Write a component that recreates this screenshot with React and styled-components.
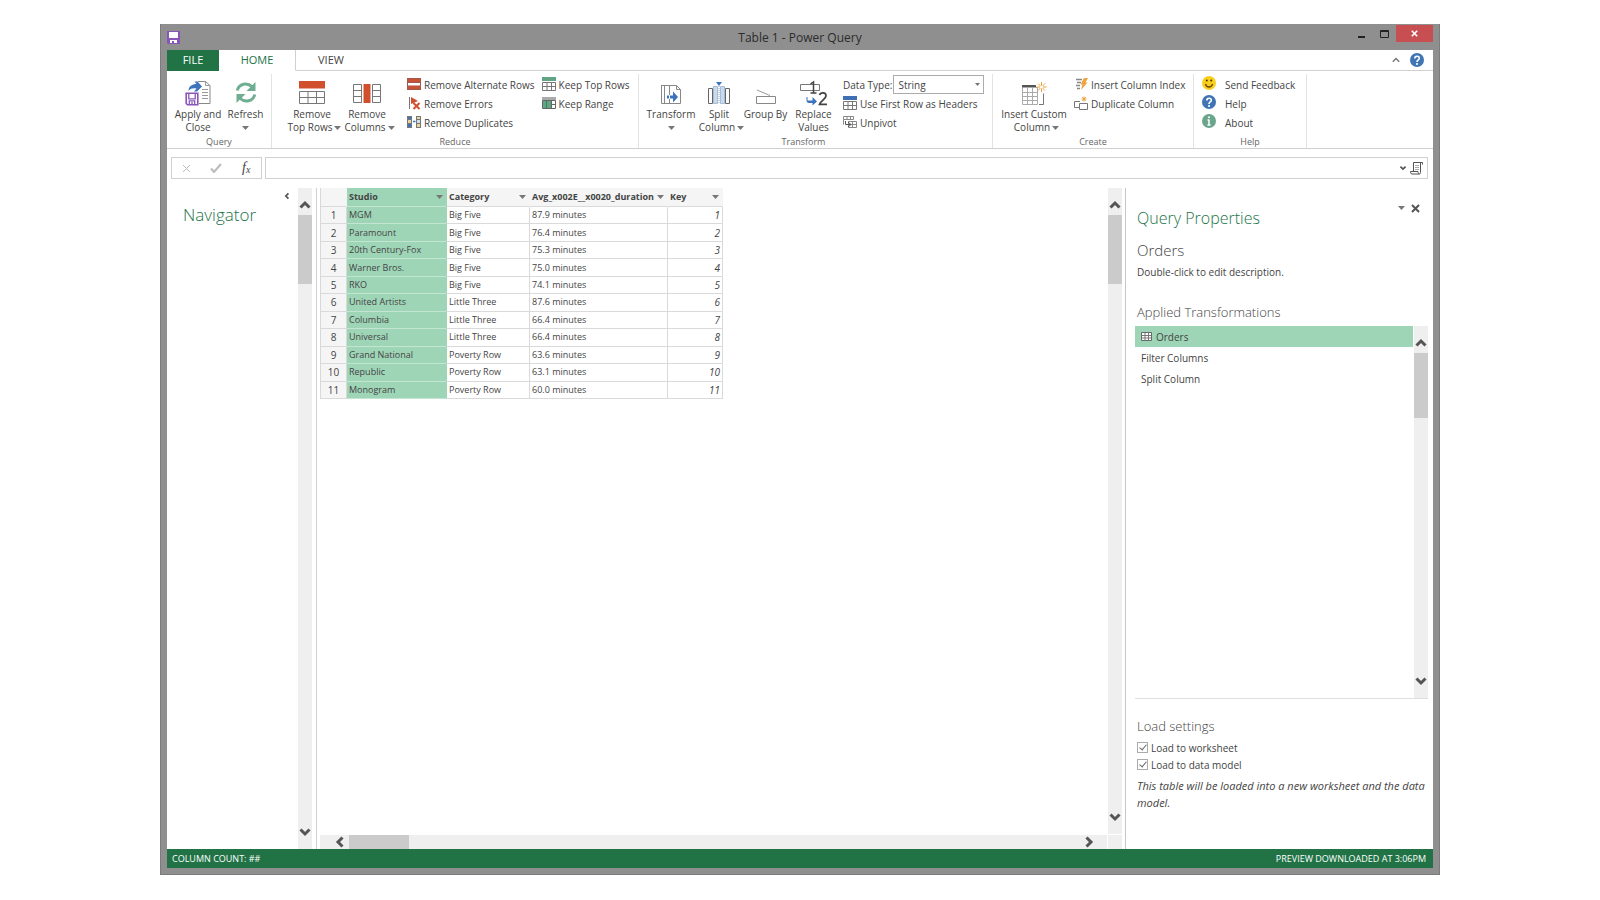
import React from "react";
import styled, { createGlobalStyle } from "styled-components";

const GlobalStyle = createGlobalStyle`
    *{
        box-sizing:border-box;
    }
    body{
        margin:0;
        background:#fff;
        color:#444;
        font-family:"Open Sans", "Noto Sans", sans-serif;
        font-size:10px;
    }
    button, input, select{
        font:inherit;
        color:inherit;
        margin:0;
        padding:0;
        border:0;
        background:none;
    }
    h1, h2, h3, p, ul{
        margin:0;
        padding:0;
        font-weight:normal;
    }
    svg{
        display:block;
        flex:none;
    }
`;

/* ---------- window ---------- */

const Desktop = styled.div`
    min-height:100vh;
    display:flex;
    padding:24px 10vw 25px;
`;

const Window = styled.div`
    flex:1;
    min-width:0;
    display:flex;
    flex-direction:column;
    padding:0 6px 6px;
    background:#8f8f8f;
    border:1px solid #7c7c7c;
    border-top-width:0;
`;

const TitleBar = styled.header`
    display:grid;
    grid-template-columns:1fr auto 1fr;
    align-items:center;
    height:26px;
`;

const Title = styled.h1`
    padding-top:1px;
    font-size:12px;
    line-height:24px;
    color:#2b2b2b;
`;

const WindowControls = styled.div`
    display:flex;
    justify-content:flex-end;
    align-self:start;
    padding-top:1px;
`;

const ControlButton = styled.button`
    display:grid;
    place-items:center;
    width:${p=>p.$close ? 37 : 23}px;
    height:17px;
    background:${p=>p.$close ? '#c84f51' : 'none'};
`;

const Body = styled.div`
    flex:1;
    display:flex;
    flex-direction:column;
    background:#fff;
`;

/* ---------- ribbon ---------- */

const Tabs = styled.nav`
    display:flex;
    height:21px;
`;

const Tab = styled.button`
    width:${p=>p.$width}px;
    font-size:11px;
    line-height:18px;
    color:${p=>p.$file ? '#fff' : p.$active ? '#217346' : '#444'};
    background:${p=>p.$file ? '#217346' : '#fff'};
    border-bottom:1px solid ${p=>p.$file ? '#217346' : p.$active ? '#fff' : '#d0d0d0'};
    border-right:${p=>p.$active ? '1px solid #d0d0d0' : '0'};
`;

const TabsRest = styled.div`
    flex:1;
    display:flex;
    justify-content:flex-end;
    align-items:center;
    gap:9px;
    padding-right:9px;
    border-bottom:1px solid #d0d0d0;
`;

const IconButton = styled.button`
    display:grid;
    place-items:center;
`;

const Ribbon = styled.div`
    display:flex;
    height:78px;
    padding-top:3px;
    border-bottom:1px solid #d0d0d0;
`;

const Group = styled.section`
    display:flex;
    flex-direction:column;
    width:${p=>p.$width}px;
    border-right:1px solid #e3e3e3;
`;

const GroupBody = styled.div`
    flex:1;
    display:flex;
    padding-left:${p=>p.$pad}px;
`;

const GroupLabel = styled.h2`
    padding-right:${p=>p.$pad || 0}px;
    font-size:9px;
    line-height:12px;
    color:#666;
    text-align:center;
`;

const BigButton = styled.button`
    display:flex;
    flex-direction:column;
    align-items:center;
    width:${p=>p.$width}px;
    padding-top:6px;
    line-height:13px;
    white-space:nowrap;
    svg{
        margin-bottom:2px;
    }
`;

const SecondLine = styled.span`
    display:flex;
    align-items:center;
    gap:2px;
    min-height:13px;
    padding-left:${p=>p.$indent ? 5 : 0}px;
    svg{
        margin-bottom:0;
    }
`;

const SmallColumn = styled.div`
    display:flex;
    flex-direction:column;
    padding-left:${p=>p.$pad || 0}px;
    padding-top:1px;
`;

const SmallButton = styled.button`
    display:flex;
    align-items:center;
    gap:${p=>p.$wide ? 9 : 3}px;
    height:19px;
    white-space:nowrap;
    svg{
        margin-bottom:${p=>p.$wide ? 4 : 1}px;
    }
`;

const Field = styled.div`
    display:flex;
    align-items:center;
    gap:1px;
    height:19px;
`;

const SelectBox = styled.div`
    display:grid;
    align-items:center;
    width:91px;
    height:19px;
    border:1px solid #ababab;
    select, svg{
        grid-area:1 / 1;
    }
    select{
        appearance:none;
        width:100%;
        padding-left:4px;
        outline:0;
    }
    svg{
        justify-self:end;
        margin-right:3px;
        pointer-events:none;
    }
`;

/* ---------- formula bar ---------- */

const FormulaBar = styled.div`
    display:flex;
    gap:3px;
    padding:8px 5px 9px 4px;
`;

const FormulaButtons = styled.div`
    display:grid;
    grid-template-columns:repeat(3, 1fr);
    width:91px;
    height:22px;
    border:1px solid #d0d0d0;
`;

const FormulaField = styled.div`
    flex:1;
    display:flex;
    align-items:center;
    gap:3px;
    height:22px;
    padding-right:4px;
    border:1px solid #d0d0d0;
    input{
        flex:1;
        height:100%;
        padding:0 4px;
        outline:0;
    }
`;

/* ---------- main area ---------- */

const Main = styled.main`
    flex:1;
    display:flex;
    min-height:0;
`;

const Navigator = styled.aside`
    display:flex;
    width:150px;
    padding-right:4px;
    border-right:1px solid #d0d0d0;
`;

const NavigatorHead = styled.div`
    flex:1;
    display:flex;
    flex-direction:column;
    padding:1px 7px 0 16px;
    button{
        align-self:flex-end;
        height:13px;
        width:8px;
    }
`;

const PaneTitle = styled.h2`
    font-size:${p=>p.$size || 17}px;
    line-height:26px;
    font-weight:300;
    color:#217346;
`;

const Track = styled.div`
    display:flex;
    flex-direction:${p=>p.$flat ? 'row' : 'column'};
    ${p=>p.$flat ? 'height' : 'width'}:14px;
    background:#efefef;
    button{
        flex:none;
        display:grid;
        place-items:center;
        ${p=>p.$flat ? 'width:29px; height:14px;' : 'width:14px; height:27px;'}
    }
    button:first-child{
        ${p=>p.$flat ? 'padding-left:11px;' : 'padding-top:7px;'}
    }
    button:last-child{
        padding-${p=>p.$flat ? 'right' : 'bottom'}:8px;
    }
`;

const Thumb = styled.div`
    flex:none;
    ${p=>p.$flat ? 'width' : 'height'}:${p=>p.$size}px;
    ${p=>p.$flat ? 'margin-right' : 'margin-bottom'}:auto;
    background:#cbcbcb;
`;

const Preview = styled.div`
    flex:1;
    min-width:0;
    display:grid;
    grid-template-columns:1fr 14px;
    grid-template-rows:1fr 14px;
    gap:1px;
    padding:0 3px;
`;

const Corner = styled.div`
    background:#efefef;
`;

const Table = styled.table`
    justify-self:start;
    align-self:start;
    table-layout:fixed;
    width:403px;
    height:211px;
    border-collapse:separate;
    border-spacing:0;
    border-left:1px solid #d9d9d9;
    font-size:9px;
    line-height:14px;
    th, td{
        height:17px;
        padding:0 2px;
        text-align:left;
        white-space:nowrap;
        border-right:1px solid #dadada;
        border-bottom:1px solid #dadada;
    }
    thead th{
        height:19px;
        background:#f5f5f5;
        border-right-color:#f5f5f5;
    }
    tbody th{
        background:#f5f5f5;
        font-size:10px;
        font-weight:normal;
        text-align:center;
    }
    td:last-child{
        text-align:right;
        font-size:10px;
        font-style:italic;
    }
    th:nth-child(2), td:nth-child(2){
        background:#9fd5b7;
        border-color:#9fd5b7;
        border-bottom-color:#c4e5d2;
    }
`;

const HeadCell = styled.div`
    display:flex;
    justify-content:space-between;
    align-items:center;
    button{
        padding:0 1px;
    }
`;

/* ---------- properties ---------- */

const Properties = styled.aside`
    display:flex;
    flex-direction:column;
    width:308px;
    padding:13px 5px 0 11px;
    border-left:1px solid #c6c6c6;
`;

const PropertiesHead = styled.div`
    display:flex;
    justify-content:space-between;
    align-items:flex-start;
    ${PaneTitle}{
        padding-top:4px;
    }
`;

const PaneButtons = styled.div`
    display:flex;
    gap:6px;
    padding-right:8px;
    button{
        height:14px;
    }
`;

const SubTitle = styled.h3`
    margin-top:${p=>p.$top}px;
    font-size:${p=>p.$size || 13}px;
    line-height:20px;
    font-weight:300;
`;

const Description = styled.p`
    line-height:16px;
    padding-top:4px;
`;

const StepsBox = styled.div`
    flex:1;
    display:flex;
    margin-top:4px;
    margin-left:-2px;
    border-bottom:1px solid #dedede;
`;

const Steps = styled.ul`
    flex:1;
    list-style:none;
`;

const Step = styled.li`
    display:flex;
    align-items:center;
    gap:4px;
    height:21px;
    padding-left:6px;
    margin-right:1px;
    background:${p=>p.$selected ? '#9fd5b7' : 'none'};
`;

const LoadSettings = styled.div`
    height:150px;
    padding-top:17px;
    h3{
        margin-bottom:3px;
    }
    p{
        padding:4px 0;
        font-size:11px;
        line-height:17px;
        font-style:italic;
    }
`;

const Check = styled.label`
    display:flex;
    align-items:center;
    gap:3px;
    height:17px;
    input{
        appearance:none;
        display:grid;
        place-items:center;
        width:11px;
        height:11px;
        border:1px solid #ababab;
    }
    input:checked::after{
        content:"";
        width:3px;
        height:6px;
        margin-bottom:2px;
        border:solid #666;
        border-width:0 1px 1px 0;
        transform:rotate(40deg);
    }
`;

const StatusBar = styled.footer`
    display:flex;
    justify-content:space-between;
    padding:0 7px 0 5px;
    font-size:9px;
    line-height:19px;
    color:#fff;
    background:#217346;
`;

/* ---------- icons ---------- */

const Svg = ({w = 14, h = 14, children}) =>
    <svg width={w} height={h} viewBox={`0 0 ${w} ${h}`} fill="none" aria-hidden="true">{children}</svg>;

const Caret = () => <Svg w={7} h={4}><path d="M0 0h7L3.5 4z" fill="#777"/></Svg>;

const chevrons = {
    up:"M2.5 9.5 7 5l4.5 4.5",
    down:"M2.5 4.5 7 9l4.5-4.5",
    left:"M9.5 2.5 5 7l4.5 4.5",
    right:"M4.5 2.5 9 7l-4.5 4.5",
};

const Chevron = ({to, size = 14, width = 3, color = "#555"}) =>
    <svg width={size} height={size} viewBox="0 0 14 14" fill="none" aria-hidden="true">
        <path d={chevrons[to]} stroke={color} strokeWidth={width}/>
    </svg>;

const Cross = ({size = 9, color = "#555", width = 2}) =>
    <svg width={size} height={size} viewBox="0 0 9 9" fill="none" aria-hidden="true">
        <path d="M1 1l7 7M8 1 1 8" stroke={color} strokeWidth={width}/>
    </svg>;

const Floppy = () => <Svg w={13} h={13}>
    <path d="M0 0h13v13H1L0 12z" fill="#8a55b8"/>
    <path d="M2 1h9v6H2z" fill="#fff"/>
    <path d="M3 9h7v3H7v-2H5v2H3z" fill="#fff"/>
</Svg>;

const ApplyIcon = () => <Svg w={26} h={26}>
    <path d="M13 1.500h7.500l4.500 4v18H14" fill="#fff" stroke="#888"/>
    <path d="M20.500 1.500v4H25M17 9.500h6M17 12.500h6M17 15.500h6M17 18.500h6" stroke="#999"/>
    <path d="M3.500 11c0-5 4-7 8-7L9.500 1.500h3L17 6.500l-5 5H9l2.500-3C8 8 5.500 8.500 3.500 11z" fill="#3b74bd"/>
    <path d="M1.200 13.200h11.600v11.600H2.500L1.200 23.500z" fill="#fff" stroke="#8a55b8" strokeWidth="1.600"/>
    <path d="M3.800 13.500v5.300h6.400v-5.300M4.300 24.500v-3.700h5.400v3.700M7 22v3" stroke="#8a55b8" strokeWidth="1.300"/>
</Svg>;

const RefreshIcon = () => <Svg w={24} h={26}>
    <path d="M3.200 10.500C5 3.500 13 2 18.500 7" stroke="#6fae92" strokeWidth="3"/>
    <path d="M21.500 2v9h-9z" fill="#6fae92"/>
    <path d="M20.800 14.500C19 21.500 11 23 5.500 18" stroke="#6fae92" strokeWidth="3"/>
    <path d="M2.500 23v-9h9z" fill="#6fae92"/>
</Svg>;

const TopRowsIcon = () => <Svg w={26} h={26}>
    <path d="M0 1h26v7.500H0z" fill="#d24f2e"/>
    <path d="M.5 11.500h25v12H.5zM.5 17.500h25M9 11.500v12M17.500 11.500v12" stroke="#777"/>
</Svg>;

const ColumnsIcon = () => <Svg w={28} h={26}>
    <path d="M10.500 4h7v19h-7z" fill="#d24f2e"/>
    <path d="M.5 4.500h8v18h-8zM.5 10.500h8M.5 16.500h8M19.500 4.500h8v18h-8zM19.500 10.500h8M19.500 16.500h8" stroke="#777"/>
</Svg>;

const AlternateIcon = () => <Svg>
    <path d="M0 1h14v12H0z" fill="#9c5a4a"/>
    <path d="M1 2h12v3H1zM1 9h12v3H1z" fill="#cb5136"/>
    <path d="M1 6h12v2.500H1z" fill="#fff"/>
</Svg>;

const ErrorsIcon = () => <Svg>
    <path d="M2.500 1v12" stroke="#777"/>
    <path d="M4 1l7 4L4 8z" fill="#d24f2e"/>
    <path d="M6.500 7l6 6M12.500 7l-6 6" stroke="#d24f2e" strokeWidth="2"/>
</Svg>;

const DuplicatesIcon = () => <Svg>
    <path d="M0 1h5v12H0zM9 1h5v12H9z" fill="#777"/>
    <path d="M1 2h3v2H1zM1 9h3v3H1z" fill="#3b74bd"/>
    <path d="M1 5h3v3H1zM10 2h3v2h-3zM10 9h3v3h-3z" fill="#e8d6a0"/>
    <path d="M10 5h3v3h-3z" fill="#cfdff2"/>
    <path d="M6 6.500h2.500" stroke="#3b74bd" strokeWidth="1.500"/>
</Svg>;

const KeepTopIcon = ({head = "#5fa584"}) => <Svg>
    <path d="M0 0h14v4H0z" fill={head}/>
    <path d="M.5 5.500h13v8H.5zM.5 9.500h13M5 5.500v8M9.500 5.500v8" stroke="#777"/>
</Svg>;

const KeepRangeIcon = () => <Svg>
    <path d="M0 1h14v3H0z" fill="#aaa"/>
    <path d="M.5 4.500h13v8H.5zM9 8.500h5" stroke="#666"/>
    <path d="M1 5h8v7H1z" fill="#5fa584"/>
    <path d="M4.500 4.500v8" stroke="#3f7d60"/>
    <path d="M9.500 4.500v8" stroke="#666"/>
</Svg>;

const TransformIcon = () => <Svg w={22} h={26}>
    <path d="M1 5.500h15.500l4 4v14h-19v-18M9.500 5.500v18M4.500 5.500v18M16.500 5.500v4h4" stroke="#888"/>
    <path d="M7 15.500h6v-4l5 5.500-5 5.500v-4H7z" fill="#3b74bd"/>
    <path d="M9.500 15v4" stroke="#fff"/>
</Svg>;

const SplitIcon = () => <Svg w={22} h={26}>
    <path d="M.5 8.500h4v15h-4zM17.500 8.500h4v15h-4z" fill="#fff" stroke="#666"/>
    <path d="M5.500 6.500h4v17h-4zM12.500 6.500h4v17h-4z" fill="#c9dbf2" stroke="#a9bcd6"/>
    <path d="M8 2h6l-3 4z" fill="#3b74bd"/>
    <path d="M11 6v18" stroke="#8ea6c4" strokeDasharray="1 1"/>
</Svg>;

const GroupByIcon = () => <Svg w={20} h={26}>
    <path d="M.5 16.500h19v7H.5z" stroke="#888"/>
    <path d="M1 10l13 5.500" stroke="#999"/>
</Svg>;

const ReplaceIcon = () => <Svg w={28} h={26}>
    <path d="M.5 4.500h19v6H.5z" stroke="#777"/>
    <path d="M10.500 4l3-2v11M10.500 13h6" stroke="#444" strokeWidth="1.500"/>
    <path d="M7.500 17v3.500h5V17l4.500 4.500-4.500 4V23H9c-1.500 0-2.500-1-2.500-2.500V17z" fill="#3b74bd"/>
    <path d="M19.500 15c1-3 6.500-3 6.500.8 0 3-5 5-6.500 8.500H27" stroke="#444" strokeWidth="1.700"/>
</Svg>;

const UnpivotIcon = () => <Svg>
    <path d="M.5 1.500h10v3H.5zM4 1.500v3M7.500 1.500v3M.5 4.500v5" stroke="#888"/>
    <path d="M5.500 6.500h8v6h-8zM5.500 9.500h8M9.500 6.500v6" stroke="#888"/>
    <path d="M2.500 6v3.500H7M5 7l3 2.500L5 12" stroke="#555"/>
</Svg>;

const spark = (x, y, r) => <path
    d={`M${x} ${y - r}v${2 * r}M${x - r} ${y}h${2 * r}M${x - r * .7} ${y - r * .7}l${r * 1.4} ${r * 1.4}M${x + r * .7} ${y - r * .7}l${-r * 1.4} ${r * 1.4}`}
    stroke="#e8a33d"/>;

const CustomColumnIcon = () => <Svg w={27} h={26}>
    <path d="M1 5h14v3H1z" fill="#555"/>
    <path d="M1.500 7.500h15v17h-15zM1.500 12.500h15M1.500 16.500h15M1.500 20.500h15M6.500 7.500v17M11.500 7.500v17" stroke="#aaa"/>
    <path d="M18 24.500h4.500v-11" stroke="#777"/>
    {spark(20.5, 7, 5)}
    <circle cx="20.500" cy="7" r="1.500" fill="#fff"/>
</Svg>;

const IndexIcon = () => <Svg>
    <path d="M2 2.500h6M3 5.500h4M2 8.500h4M3 11.500h3" stroke="#888" strokeWidth="1.500"/>
    <path d="M10 1h4l-2.500 4.500h2L7 13l1.500-5.500h-2z" fill="#eea33c"/>
</Svg>;

const DuplicateIcon = () => <Svg>
    <path d="M5 11.500H.5v-6H6M5.500 7.500h8v6h-8z" stroke="#777"/>
    {spark(10, 3, 2.5)}
</Svg>;

const Smile = () => <Svg>
    <circle cx="7" cy="7" r="7" fill="#f8cf1c"/>
    <path d="M3.500 8c1 4 6 4 7 0" stroke="#6b4a00" strokeWidth="1.300"/>
    <circle cx="4.800" cy="4.500" r="1" fill="#4c3500"/>
    <circle cx="9.200" cy="4.500" r="1" fill="#4c3500"/>
</Svg>;

const HelpIcon = () => <Svg>
    <circle cx="7" cy="7" r="7" fill="#3f74b5"/>
    <path d="M4.800 5.500c0-3 4.500-3 4.500-.3C9.300 7 7 6.800 7 9" stroke="#fff" strokeWidth="1.600"/>
    <circle cx="7" cy="11" r="1.100" fill="#fff"/>
</Svg>;

const InfoIcon = () => <Svg>
    <circle cx="7" cy="7" r="7" fill="#6ba58c"/>
    <path d="M7 5.500V11M5.500 6H7M5.500 11h3" stroke="#fff" strokeWidth="1.500"/>
    <circle cx="7" cy="3.300" r="1" fill="#fff"/>
</Svg>;

const ScriptIcon = () => <Svg w={13} h={14}>
    <path d="M3.500 10V1.500h9v2M10.500 2v9.500c0 1-.5 1.500-1.500 1.500H2c-1.500 0-1.500-2-1.500-2.500H8c0 1.500.5 2.500 1.500 2.500" stroke="#555"/>
    <path d="M5 4.500h4M5 6.500h4M5 8.500h4" stroke="#aaa"/>
</Svg>;

const TableIcon = () => <Svg w={11} h={9}>
    <path d="M.5.5h10v8H.5z" fill="#fff" stroke="#666"/>
    <path d="M.5 3.500h10M.5 6h10M4 .5v8M7.500.5v8" stroke="#777"/>
</Svg>;

const FxIcon = styled.span`
    font-family:"Liberation Serif", serif;
    font-size:14px;
    line-height:14px;
    font-style:italic;
    sub{
        font-size:10px;
        line-height:0;
        vertical-align:-1px;
    }
`;

/* ---------- data ---------- */

const columns = [
    {name:"Studio", width:100},
    {name:"Category", width:83},
    {name:"Avg_x002E__x0020_duration", width:138},
    {name:"Key", width:55},
];

const rows = [
    ["MGM", "Big Five", "87.9 minutes"],
    ["Paramount", "Big Five", "76.4 minutes"],
    ["20th Century-Fox", "Big Five", "75.3 minutes"],
    ["Warner Bros.", "Big Five", "75.0 minutes"],
    ["RKO", "Big Five", "74.1 minutes"],
    ["United Artists", "Little Three", "87.6 minutes"],
    ["Columbia", "Little Three", "66.4 minutes"],
    ["Universal", "Little Three", "66.4 minutes"],
    ["Grand National", "Poverty Row", "63.6 minutes"],
    ["Republic", "Poverty Row", "63.1 minutes"],
    ["Monogram", "Poverty Row", "60.0 minutes"],
];

const steps = ["Orders", "Filter Columns", "Split Column"];

/* ---------- parts ---------- */

const Big = ({icon, top, bottom, menu, width}) =>
    <BigButton $width={width}>
        {icon}
        <span>{top}</span>
        <SecondLine $indent={bottom && menu}>{bottom}{menu && <Caret/>}</SecondLine>
    </BigButton>;

const Small = ({icon, children, wide}) =>
    <SmallButton $wide={wide}>{icon}{children}</SmallButton>;

const ScrollBar = ({flat, size}) =>
    <Track $flat={flat}>
        <button aria-label={flat ? "Scroll left" : "Scroll up"}><Chevron to={flat ? "left" : "up"}/></button>
        <Thumb $flat={flat} $size={size}/>
        <button aria-label={flat ? "Scroll right" : "Scroll down"}><Chevron to={flat ? "right" : "down"}/></button>
    </Track>;

const RibbonBar = () =>
    <Ribbon>
        <Group $width={105}>
            <GroupBody $pad={5}>
                <Big icon={<ApplyIcon/>} top="Apply and" bottom="Close" width={52}/>
                <Big icon={<RefreshIcon/>} top="Refresh" menu width={43}/>
            </GroupBody>
            <GroupLabel>Query</GroupLabel>
        </Group>
        <Group $width={367}>
            <GroupBody $pad={11}>
                <Big icon={<TopRowsIcon/>} top="Remove" bottom="Top Rows" menu width={58}/>
                <Big icon={<ColumnsIcon/>} top="Remove" bottom="Columns" menu width={52}/>
                <SmallColumn $pad={14}>
                    <Small icon={<AlternateIcon/>}>Remove Alternate Rows</Small>
                    <Small icon={<ErrorsIcon/>}>Remove Errors</Small>
                    <Small icon={<DuplicatesIcon/>}>Remove Duplicates</Small>
                </SmallColumn>
                <SmallColumn $pad={7}>
                    <Small icon={<KeepTopIcon/>}>Keep Top Rows</Small>
                    <Small icon={<KeepRangeIcon/>}>Keep Range</Small>
                </SmallColumn>
            </GroupBody>
            <GroupLabel>Reduce</GroupLabel>
        </Group>
        <Group $width={354}>
            <GroupBody $pad={6}>
                <Big icon={<TransformIcon/>} top="Transform" menu width={52}/>
                <Big icon={<SplitIcon/>} top="Split" bottom="Column" menu width={44}/>
                <Big icon={<GroupByIcon/>} top="Group By" width={49}/>
                <Big icon={<ReplaceIcon/>} top="Replace" bottom="Values" width={47}/>
                <SmallColumn $pad={6}>
                    <Field>
                        <label htmlFor="data-type">Data Type:</label>
                        <SelectBox>
                            <select id="data-type" defaultValue="String">
                                <option>String</option>
                                <option>Number</option>
                            </select>
                            <Svg w={5} h={3}><path d="M0 0h5L2.500 3z" fill="#777"/></Svg>
                        </SelectBox>
                    </Field>
                    <Small icon={<KeepTopIcon head="#3f6fb5"/>}>Use First Row as Headers</Small>
                    <Small icon={<UnpivotIcon/>}>Unpivot</Small>
                </SmallColumn>
            </GroupBody>
            <GroupLabel $pad={24}>Transform</GroupLabel>
        </Group>
        <Group $width={201}>
            <GroupBody $pad={7}>
                <Big icon={<CustomColumnIcon/>} top="Insert Custom" bottom="Column" menu width={68}/>
                <SmallColumn $pad={6}>
                    <Small icon={<IndexIcon/>}>Insert Column Index</Small>
                    <Small icon={<DuplicateIcon/>}>Duplicate Column</Small>
                </SmallColumn>
            </GroupBody>
            <GroupLabel>Create</GroupLabel>
        </Group>
        <Group $width={113}>
            <GroupBody $pad={8}>
                <SmallColumn>
                    <Small icon={<Smile/>} wide>Send Feedback</Small>
                    <Small icon={<HelpIcon/>} wide>Help</Small>
                    <Small icon={<InfoIcon/>} wide>About</Small>
                </SmallColumn>
            </GroupBody>
            <GroupLabel>Help</GroupLabel>
        </Group>
    </Ribbon>;

const DataTable = () =>
    <Table>
        <colgroup>
            <col width={26}/>
            {columns.map(c=><col key={c.name} width={c.width}/>)}
        </colgroup>
        <thead>
            <tr>
                <th aria-label="Row"/>
                {columns.map(c=>
                    <th key={c.name} scope="col">
                        <HeadCell>{c.name}<button aria-label={`${c.name} menu`}><Caret/></button></HeadCell>
                    </th>
                )}
            </tr>
        </thead>
        <tbody>
            {rows.map((row,i)=>
                <tr key={row[0]}>
                    <th scope="row">{i + 1}</th>
                    {row.map((cell,j)=><td key={j}>{cell}</td>)}
                    <td>{i + 1}</td>
                </tr>
            )}
        </tbody>
    </Table>;

export default ()=>{

    let [selected,setSelected] = React.useState(0);

    return <Desktop>
        <GlobalStyle/>
        <Window>
            <TitleBar>
                <Floppy/>
                <Title>Table 1 - Power Query</Title>
                <WindowControls>
                    <ControlButton aria-label="Minimize"><Svg w={8} h={8}><path d="M0 6h7v2H0z" fill="#222"/></Svg></ControlButton>
                    <ControlButton aria-label="Maximize"><Svg w={9} h={8}><path d="M.5.5h8v7h-8zM0 1.500h9" stroke="#222"/></Svg></ControlButton>
                    <ControlButton $close aria-label="Close"><Cross size={7} color="#fff"/></ControlButton>
                </WindowControls>
            </TitleBar>
            <Body>
                <Tabs>
                    <Tab $file $width={52}>FILE</Tab>
                    <Tab $active $width={77}>HOME</Tab>
                    <Tab $width={70}>VIEW</Tab>
                    <TabsRest>
                        <IconButton aria-label="Collapse ribbon"><Chevron to="up" size={10} width={2} color="#777"/></IconButton>
                        <IconButton aria-label="Help"><HelpIcon/></IconButton>
                    </TabsRest>
                </Tabs>
                <RibbonBar/>
                <FormulaBar>
                    <FormulaButtons>
                        <IconButton aria-label="Cancel"><Cross color="#bbb" width={1}/></IconButton>
                        <IconButton aria-label="Enter"><Svg w={12} h={10}><path d="M1 5.500 4 9l7-8" stroke="#bbb" strokeWidth="2"/></Svg></IconButton>
                        <IconButton aria-label="Insert function"><FxIcon>f<sub>x</sub></FxIcon></IconButton>
                    </FormulaButtons>
                    <FormulaField>
                        <input aria-label="Formula"/>
                        <IconButton aria-label="Expand formula bar"><Chevron to="down" size={8}/></IconButton>
                        <IconButton aria-label="Advanced editor"><ScriptIcon/></IconButton>
                    </FormulaField>
                </FormulaBar>
                <Main>
                    <Navigator>
                        <NavigatorHead>
                            <IconButton aria-label="Collapse navigator"><Chevron to="left" size={8}/></IconButton>
                            <PaneTitle>Navigator</PaneTitle>
                        </NavigatorHead>
                        <ScrollBar size={69}/>
                    </Navigator>
                    <Preview>
                        <DataTable/>
                        <ScrollBar size={69}/>
                        <ScrollBar flat size={60}/>
                        <Corner/>
                    </Preview>
                    <Properties>
                        <PropertiesHead>
                            <PaneTitle $size={16}>Query Properties</PaneTitle>
                            <PaneButtons>
                                <IconButton aria-label="Pane options"><Caret/></IconButton>
                                <IconButton aria-label="Close pane"><Cross/></IconButton>
                            </PaneButtons>
                        </PropertiesHead>
                        <SubTitle $top={9} $size={15}>Orders</SubTitle>
                        <Description>Double-click to edit description.</Description>
                        <SubTitle $top={22}>Applied Transformations</SubTitle>
                        <StepsBox>
                            <Steps>
                                {steps.map((name,i)=>
                                    <Step key={name} $selected={i === selected} onClick={()=>setSelected(i)}>
                                        {i === 0 && <TableIcon/>}{name}
                                    </Step>
                                )}
                            </Steps>
                            <ScrollBar size={65}/>
                        </StepsBox>
                        <LoadSettings>
                            <SubTitle $top={0}>Load settings</SubTitle>
                            <Check><input type="checkbox" defaultChecked/>Load to worksheet</Check>
                            <Check><input type="checkbox" defaultChecked/>Load to data model</Check>
                            <p>This table will be loaded into a new worksheet and the data model.</p>
                        </LoadSettings>
                    </Properties>
                </Main>
                <StatusBar>
                    <span>COLUMN COUNT: ##</span>
                    <span>PREVIEW DOWNLOADED AT 3:06PM</span>
                </StatusBar>
            </Body>
        </Window>
    </Desktop>
}
